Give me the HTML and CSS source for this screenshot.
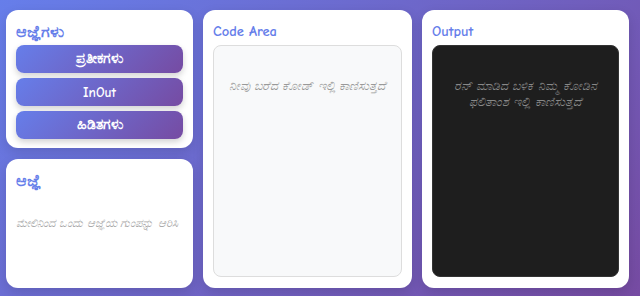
FILE: index.html
```html
<!DOCTYPE html>
<html lang="kn">
<head>
<meta charset="utf-8">
<title>Code Playground</title>
<link rel="stylesheet" href="styles.css">
</head>
<body>
<div class="layout">
  <div class="left">
    <section class="card commands">
      <h2 class="title kn-title">ಆಜ್ಞೆಗಳು</h2>
      <div class="btns">
        <button class="btn">ಪ್ರತೀಕಗಳು</button>
        <button class="btn">InOut</button>
        <button class="btn">ಹಿಡಿತಗಳು</button>
      </div>
    </section>
    <section class="card command">
      <h2 class="title kn-title">ಆಜ್ಞೆ</h2>
      <p class="hint">ಮೇಲಿನಿಂದ ಒಂದು ಆಜ್ಞೆಯ ಗುಂಪನ್ನು ಆರಿಸಿ</p>
    </section>
  </div>
  <section class="card panel">
    <h2 class="title">Code Area</h2>
    <div class="box code"><p class="ph">ನೀವು ಬರೆದ ಕೋಡ್ ಇಲ್ಲಿ ಕಾಣಿಸುತ್ತದೆ</p></div>
  </section>
  <section class="card panel">
    <h2 class="title">Output</h2>
    <div class="box out"><p class="ph">ರನ್ ಮಾಡಿದ ಬಳಿಕ ನಿಮ್ಮ ಕೋಡಿನ ಫಲಿತಾಂಶ ಇಲ್ಲಿ ಕಾಣಿಸುತ್ತದೆ</p></div>
  </section>
</div>
</body>
</html>
```
FILE: styles.css
```css
* { box-sizing: border-box; }
html, body { height: 100%; }
body {
  margin: 0;
  font-family: "Comic Sans MS", "Comic Neue", cursive;
  background: linear-gradient(135deg, #667eea 0%, #764ba2 100%);
  overflow: hidden;
}
.layout {
  height: 296px;
  padding: 10px 11px 8px 6px;
  display: grid;
  grid-template-columns: 187px 209px 207px;
  column-gap: 10px;
}
.left {
  display: grid;
  grid-template-rows: 138px 1fr;
  row-gap: 11px;
}
.card {
  background: #fff;
  border-radius: 12px;
  box-shadow: 0 4px 12px rgba(0,0,0,0.12);
  padding: 14px 10px 11px 10px;
  display: flex;
  flex-direction: column;
}
.title {
  margin: 0 0 5px 0;
  font-size: 14.5px;
  line-height: 16px;
  font-weight: bold;
  color: #667eea;
}
.kn-title { font-size: 16px; }
.btns { display: flex; flex-direction: column; gap: 5px; }
.btn {
  height: 28px;
  border: none;
  border-radius: 8px;
  background: linear-gradient(135deg, #667eea 0%, #764ba2 100%);
  color: #fff;
  font-family: inherit;
  font-size: 13.5px;
  font-weight: bold;
  box-shadow: 0 3px 6px rgba(0,0,0,0.18);
}
.hint {
  margin: 23px 0 0 0;
  font-size: 11.5px;
  color: #aaa;
  font-style: italic;
}
.box {
  flex: 1;
  border-radius: 8px;
  padding: 32px 14px;
  text-align: center;
}
.code { background: #f8f9fa; border: 1px solid #ddd; }
.out { background: #1e1e1e; border: 1px solid #333; }
.ph {
  margin: 0;
  font-size: 12.5px;
  line-height: 16px;
  font-style: italic;
  color: #999;
}
.out .ph { color: #888; }
```
